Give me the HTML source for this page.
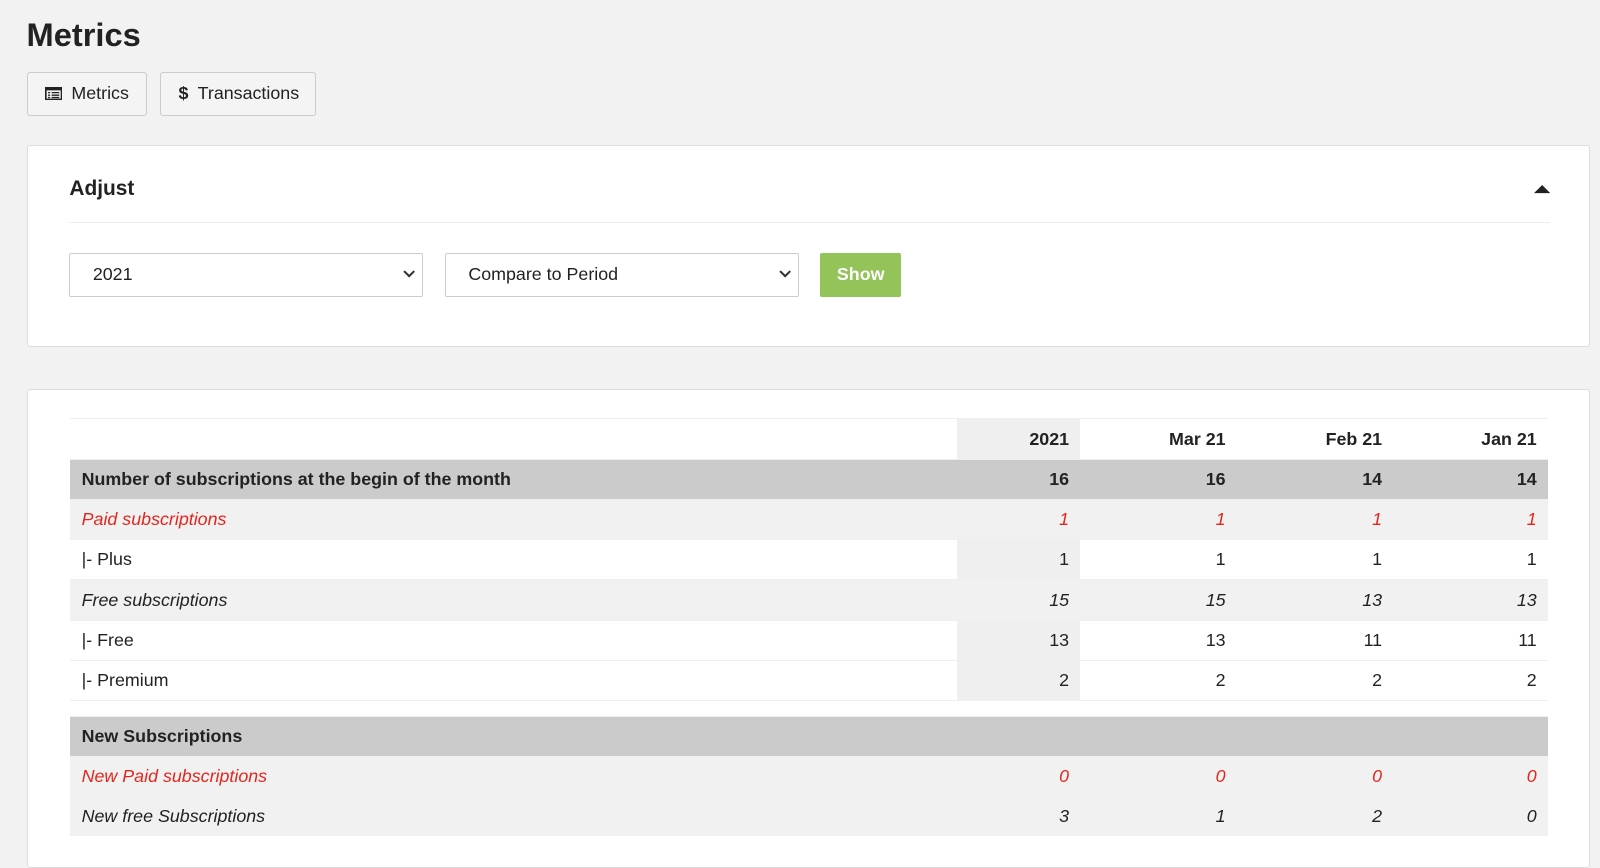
<!DOCTYPE html>
<html><head><style>
body{margin:0;background:#f2f2f2;font-family:"Liberation Sans",sans-serif;color:#222;width:1600px;height:835px;overflow:hidden;position:relative}
#w{position:absolute;left:0;top:0;width:1568px;height:820px;zoom:1.0204}
h1{position:absolute;left:26px;top:16px;margin:0;font-size:32px;font-weight:bold}
.btn{position:absolute;top:71px;height:43px;border:1px solid #ccc;border-radius:3px;background:#f4f4f4;font-size:17.5px;line-height:41px;box-sizing:border-box;padding-left:17px}
.panel{position:absolute;left:26px;width:1532px;background:#fff;border:1px solid #ddd;border-radius:3px;box-sizing:border-box}
.sel{position:absolute;top:248px;height:43px;border:1px solid #ccc;border-radius:2px;background:#fff;box-sizing:border-box;font-size:17.5px;line-height:41px;padding-left:22px}
.sel svg{position:absolute;right:6px;top:15px}
table{position:absolute;left:69px;top:410px;width:1448px;border-collapse:collapse;font-size:17.5px}
td{height:38.5px;padding:0 11px;text-align:right;border-top:1px solid #eee}
td:first-child{text-align:left;width:847px}
.h td{font-weight:bold;background:#fff}
.s td{background:#cbcbcb;font-weight:bold}
.g td{background:#f1f1f1}
.w td{background:#fff}
.w td:nth-child(2),.h td:nth-child(2){background:#efefef}
.r td{color:#e3261d;font-style:italic}
.i td{font-style:italic}
</style></head><body><div id="w">
<h1>Metrics</h1>
<div class="btn" style="left:26px;width:118px"><svg width="17" height="13" style="vertical-align:-1px;margin-right:9px" viewBox="0 0 17 13"><rect x="0.8" y="0.8" width="15.4" height="11.4" fill="none" stroke="#222" stroke-width="1.6"/><rect x="0.8" y="0.8" width="15.4" height="2.5" fill="#222"/><path d="M3 5.5h2M3 8h2M3 10.3h2M6.5 5.5h7.5M6.5 8h7.5M6.5 10.3h7.5" stroke="#222" stroke-width="1.3"/></svg>Metrics</div>
<div class="btn" style="left:157px;width:153px"><b style="margin-right:9px">$</b>Transactions</div>
<div class="panel" style="top:142px;height:198px">
<div style="position:absolute;left:41px;top:30px;font-size:20.5px;font-weight:bold">Adjust</div>
<svg style="position:absolute;right:38px;top:37px" width="16" height="10"><path d="M0 9L8 1L16 9Z" fill="#222"/></svg>
<div style="position:absolute;left:41px;right:38px;top:75px;border-top:1px solid #eee"></div>
</div>
<div class="sel" style="left:68px;width:347px">2021<svg width="14" height="10"><path d="M2 2l5 5 5-5" stroke="#333" stroke-width="2" fill="none"/></svg></div>
<div class="sel" style="left:436px;width:347px">Compare to Period<svg width="14" height="10"><path d="M2 2l5 5 5-5" stroke="#333" stroke-width="2" fill="none"/></svg></div>
<div style="position:absolute;left:804px;top:248px;width:79px;height:43px;background:#94c35a;border-radius:2px;color:#fff;font-weight:bold;font-size:17.5px;line-height:43px;text-align:center">Show</div>
<div class="panel" style="top:381px;height:470px"></div>
<table>
<tr class="h"><td></td><td>2021</td><td>Mar 21</td><td>Feb 21</td><td>Jan 21</td></tr>
<tr class="s"><td>Number of subscriptions at the begin of the month</td><td>16</td><td>16</td><td>14</td><td>14</td></tr>
<tr class="g r"><td>Paid subscriptions</td><td>1</td><td>1</td><td>1</td><td>1</td></tr>
<tr class="w"><td>|- Plus</td><td>1</td><td>1</td><td>1</td><td>1</td></tr>
<tr class="g i"><td>Free subscriptions</td><td>15</td><td>15</td><td>13</td><td>13</td></tr>
<tr class="w"><td>|- Free</td><td>13</td><td>13</td><td>11</td><td>11</td></tr>
<tr class="w"><td>|- Premium</td><td>2</td><td>2</td><td>2</td><td>2</td></tr>
<tr><td colspan="5" style="height:14px;background:#fff"></td></tr>
<tr class="s"><td>New Subscriptions</td><td></td><td></td><td></td><td></td></tr>
<tr class="g r"><td>New Paid subscriptions</td><td>0</td><td>0</td><td>0</td><td>0</td></tr>
<tr class="g i"><td>New free Subscriptions</td><td>3</td><td>1</td><td>2</td><td>0</td></tr>
</table>
</div></body></html>
